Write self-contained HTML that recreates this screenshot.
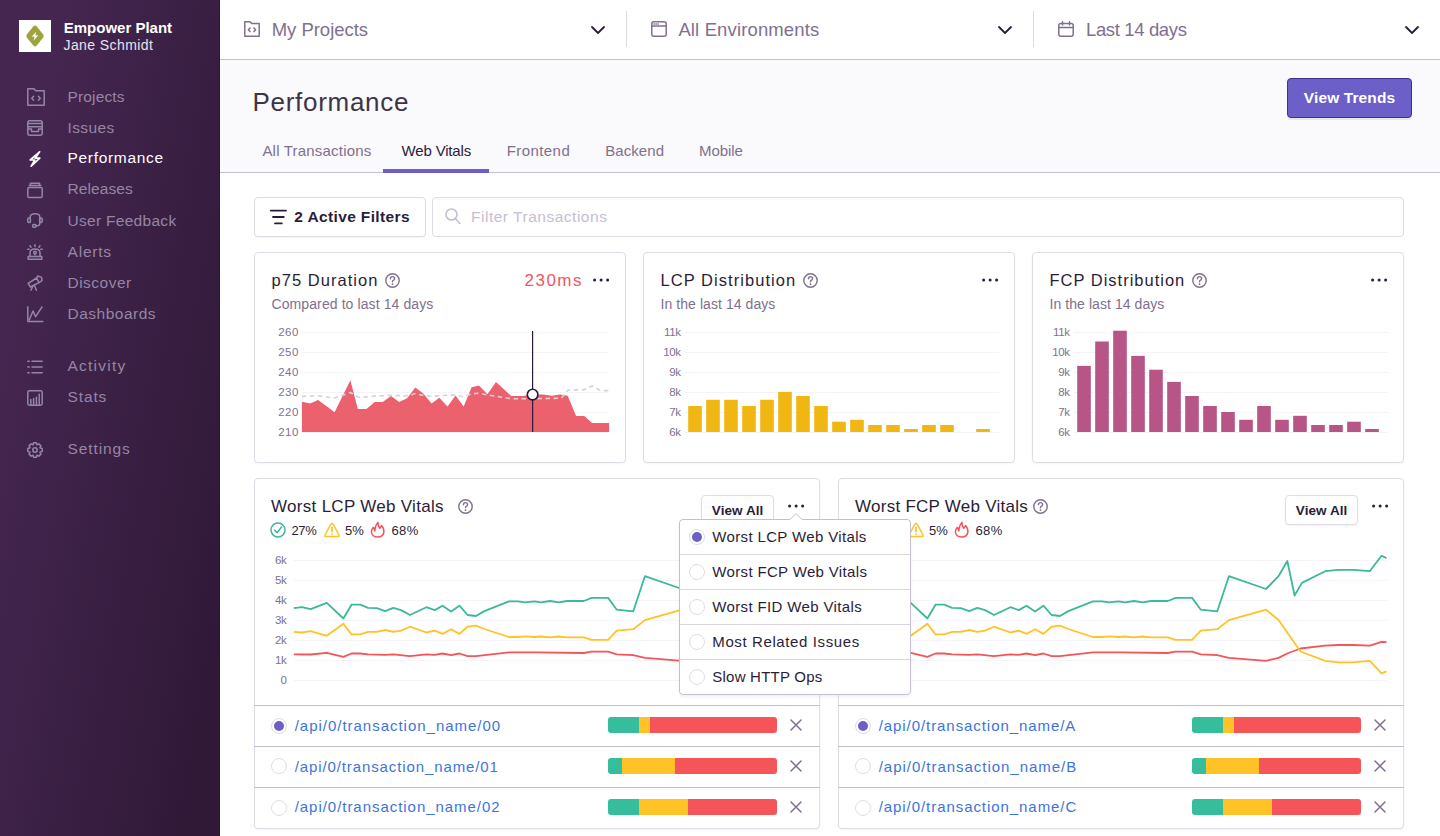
<!DOCTYPE html><html><head><meta charset="utf-8"><title>Performance</title><style>
*{margin:0;padding:0;box-sizing:border-box}
html,body{width:1440px;height:836px;overflow:hidden;background:#fff;font-family:"Liberation Sans",sans-serif}
.t{position:absolute;white-space:nowrap}
svg{overflow:visible}
</style></head><body>
<div style="position:absolute;left:0px;top:0px;width:220px;height:836px;background:linear-gradient(280deg,#2f1937 8.6%,#452650 83.4%);"></div>
<div style="position:absolute;left:219px;top:0px;width:1px;height:836px;background:rgba(30,15,40,0.35);"></div>
<div style="position:absolute;left:19px;top:20px;width:32px;height:32px;background:#fff;"></div>
<svg style="position:absolute;left:26px;top:25px;" width="18" height="22" viewBox="0 0 18 22"><path d="M9 0.4 Q9.8 0.4 10.5 1.2 L17.2 9.4 Q18.2 11 17.2 12.6 L10.5 20.8 Q9 22.4 7.5 20.8 L0.8 12.6 Q-0.2 11 0.8 9.4 L7.5 1.2 Q8.2 0.4 9 0.4Z" fill="#9DA43F"/><path d="M10.2 6.8 L5.6 11.8 L8.6 11.6 L7.6 15.4 L12.4 10.2 L9.4 10.4Z" fill="#fff"/></svg>
<div class="t" style="left:63.75px;top:20.30px;font-size:15px;line-height:15px;color:#fff;font-weight:700;">Empower Plant</div>
<div class="t" style="left:63.50px;top:37.90px;font-size:14px;line-height:14px;color:#E8E2EE;letter-spacing:0.409px;">Jane Schmidt</div>
<svg style="position:absolute;left:27px;top:88px;" width="18" height="18" viewBox="0 0 18 18"><path d="M0.8 0.8 H7 L8.8 2.8 H17.2 V17.2 H0.8 Z" fill="none" stroke="#9586A5" stroke-width="1.5" stroke-linejoin="round" stroke-linecap="round"/><path d="M6.6 8.2 L4.8 10.2 L6.6 12.2 M11.4 8.2 L13.2 10.2 L11.4 12.2" fill="none" stroke="#9586A5" stroke-width="1.5" stroke-linejoin="round" stroke-linecap="round"/></svg>
<div class="t" style="left:67.50px;top:89.13px;font-size:15.5px;line-height:15.5px;color:#9586A5;letter-spacing:0.143px;">Projects</div>
<svg style="position:absolute;left:27px;top:120px;" width="16" height="16" viewBox="0 0 16 16"><rect x="0.8" y="0.8" width="14.4" height="14.4" rx="2" fill="none" stroke="#9586A5" stroke-width="1.5" stroke-linejoin="round" stroke-linecap="round"/><path d="M0.8 3.6 H15.2 M0.8 6.8 H15.2" fill="none" stroke="#9586A5" stroke-width="1.5" stroke-linejoin="round" stroke-linecap="round"/><path d="M0.8 9 H4.5 V11.6 H11.5 V9 H15.2" fill="none" stroke="#9586A5" stroke-width="1.5" stroke-linejoin="round" stroke-linecap="round"/></svg>
<div class="t" style="left:67.50px;top:119.88px;font-size:15.5px;line-height:15.5px;color:#9586A5;letter-spacing:0.37px;">Issues</div>
<svg style="position:absolute;left:29px;top:151px;" width="12" height="16" viewBox="0 0 12 16"><path d="M10.6 0.8 L1.2 9 H5.8 L2.2 15.2 L10.8 7.2 H6.2 Z" fill="none" stroke="#fff" stroke-width="1.7" stroke-linejoin="round" stroke-linecap="round"/></svg>
<div class="t" style="left:67.50px;top:150.38px;font-size:15.5px;line-height:15.5px;color:#fff;letter-spacing:0.685px;">Performance</div>
<svg style="position:absolute;left:27px;top:182px;" width="16" height="16" viewBox="0 0 16 16"><path d="M3.4 3.5 V1.2 H12.6 V3.5" fill="none" stroke="#9586A5" stroke-width="1.5" stroke-linejoin="round" stroke-linecap="round"/><path d="M2.2 3.6 H13.8" fill="none" stroke="#9586A5" stroke-width="1.5" stroke-linejoin="round" stroke-linecap="round"/><rect x="0.8" y="5.4" width="14.4" height="10" rx="1.2" fill="none" stroke="#9586A5" stroke-width="1.5" stroke-linejoin="round" stroke-linecap="round"/></svg>
<div class="t" style="left:67.50px;top:181.38px;font-size:15.5px;line-height:15.5px;color:#9586A5;letter-spacing:0.093px;">Releases</div>
<svg style="position:absolute;left:27px;top:213px;" width="16" height="15" viewBox="0 0 16 15"><path d="M3.2 5.2 V4 Q3.2 0.8 8 0.8 Q12.8 0.8 12.8 4 V10.5 Q12.8 12.8 9.8 12.8 H8.5" fill="none" stroke="#9586A5" stroke-width="1.5" stroke-linejoin="round" stroke-linecap="round"/><rect x="0.8" y="5" width="2.6" height="4.6" rx="1" fill="none" stroke="#9586A5" stroke-width="1.5" stroke-linejoin="round" stroke-linecap="round"/><rect x="12.6" y="5" width="2.6" height="4.6" rx="1" fill="none" stroke="#9586A5" stroke-width="1.5" stroke-linejoin="round" stroke-linecap="round"/><rect x="5.6" y="11.6" width="3.4" height="2.6" rx="1" fill="none" stroke="#9586A5" stroke-width="1.5" stroke-linejoin="round" stroke-linecap="round"/></svg>
<div class="t" style="left:67.50px;top:212.88px;font-size:15.5px;line-height:15.5px;color:#9586A5;letter-spacing:0.296px;">User Feedback</div>
<svg style="position:absolute;left:27px;top:244px;" width="16" height="16" viewBox="0 0 16 16"><path d="M1.2 15.2 V12.4 H14.8 V15.2 Z" fill="none" stroke="#9586A5" stroke-width="1.5" stroke-linejoin="round" stroke-linecap="round"/><path d="M3 12.4 V9 Q3 5 8 5 Q13 5 13 9 V12.4" fill="none" stroke="#9586A5" stroke-width="1.5" stroke-linejoin="round" stroke-linecap="round"/><circle cx="8" cy="8.6" r="1.3" fill="none" stroke="#9586A5" stroke-width="1.5" stroke-linejoin="round" stroke-linecap="round"/><path d="M8 10 V11" fill="none" stroke="#9586A5" stroke-width="1.5" stroke-linejoin="round" stroke-linecap="round"/><path d="M8 0.8 V2.4 M3 1.8 L4 3.2 M13 1.8 L12 3.2 M0.8 5.2 H2.2 M13.8 5.2 H15.2" fill="none" stroke="#9586A5" stroke-width="1.5" stroke-linejoin="round" stroke-linecap="round"/></svg>
<div class="t" style="left:67.50px;top:243.88px;font-size:15.5px;line-height:15.5px;color:#9586A5;letter-spacing:0.8px;">Alerts</div>
<svg style="position:absolute;left:27px;top:275px;" width="16" height="16" viewBox="0 0 16 16"><path d="M1.2 8.4 L9.6 3 L12 7.6 L3.4 12 Z" fill="none" stroke="#9586A5" stroke-width="1.5" stroke-linejoin="round" stroke-linecap="round"/><path d="M9.6 3 L10.6 1 L14.6 2.4 L15 5.6 L12 7.6" fill="none" stroke="#9586A5" stroke-width="1.5" stroke-linejoin="round" stroke-linecap="round"/><path d="M6 10.6 L4 15.2 M7.4 10.2 L9.4 15.2" fill="none" stroke="#9586A5" stroke-width="1.5" stroke-linejoin="round" stroke-linecap="round"/></svg>
<div class="t" style="left:67.50px;top:274.88px;font-size:15.5px;line-height:15.5px;color:#9586A5;letter-spacing:0.479px;">Discover</div>
<svg style="position:absolute;left:27px;top:306px;" width="16" height="16" viewBox="0 0 16 16"><path d="M0.8 0.8 V15.4 H15.8" fill="none" stroke="#9586A5" stroke-width="1.5" stroke-linejoin="round" stroke-linecap="round"/><path d="M2.2 14 L6 5 L8.6 10.6 L15 1" fill="none" stroke="#9586A5" stroke-width="1.5" stroke-linejoin="round" stroke-linecap="round"/></svg>
<div class="t" style="left:67.50px;top:305.88px;font-size:15.5px;line-height:15.5px;color:#9586A5;letter-spacing:0.5px;">Dashboards</div>
<svg style="position:absolute;left:27px;top:359.5px;" width="16" height="14" viewBox="0 0 16 14"><path d="M0.8 1.2 H2.2 M5 1.2 H15.2 M0.8 7 H2.2 M5 7 H15.2 M0.8 12.8 H2.2 M5 12.8 H15.2" fill="none" stroke="#9586A5" stroke-width="1.5" stroke-linejoin="round" stroke-linecap="round"/></svg>
<div class="t" style="left:67.50px;top:357.88px;font-size:15.5px;line-height:15.5px;color:#9586A5;letter-spacing:1.229px;">Activity</div>
<svg style="position:absolute;left:27px;top:389.5px;" width="16" height="16" viewBox="0 0 16 16"><rect x="0.8" y="0.8" width="14.4" height="14.4" rx="1.6" fill="none" stroke="#9586A5" stroke-width="1.5" stroke-linejoin="round" stroke-linecap="round"/><path d="M3.8 15 V9.5 M6.6 15 V8.5 M9.4 15 V7.2 M12.2 15 V4.2" fill="none" stroke="#9586A5" stroke-width="1.5" stroke-linejoin="round" stroke-linecap="round"/></svg>
<div class="t" style="left:67.50px;top:388.88px;font-size:15.5px;line-height:15.5px;color:#9586A5;letter-spacing:0.887px;">Stats</div>
<svg style="position:absolute;left:27px;top:441.5px;" width="16" height="16" viewBox="0 0 16 16"><circle cx="8" cy="8" r="2.2" fill="none" stroke="#9586A5" stroke-width="1.5" stroke-linejoin="round" stroke-linecap="round"/><path d="M6.6 0.8 H9.4 L9.9 2.8 L11.8 1.8 L13.9 3.9 L12.9 5.8 L15.2 6.4 V9.4 L12.9 10.2 L13.9 12.1 L11.8 14.2 L9.9 13.2 L9.4 15.2 H6.6 L6.1 13.2 L4.2 14.2 L2.1 12.1 L3.1 10.2 L0.8 9.4 V6.4 L3.1 5.8 L2.1 3.9 L4.2 1.8 L6.1 2.8 Z" fill="none" stroke="#9586A5" stroke-width="1.5" stroke-linejoin="round" stroke-linecap="round"/></svg>
<div class="t" style="left:67.50px;top:440.88px;font-size:15.5px;line-height:15.5px;color:#9586A5;letter-spacing:0.9px;">Settings</div>
<div style="position:absolute;left:220px;top:59px;width:1220px;height:1px;background:#C6BECF;"></div>
<div style="position:absolute;left:626px;top:11px;width:1px;height:36px;background:#E0DCE5;"></div>
<div style="position:absolute;left:1033px;top:11px;width:1px;height:36px;background:#E0DCE5;"></div>
<svg style="position:absolute;left:244px;top:21px;" width="16" height="16" viewBox="0 0 16 16"><path d="M0.8 0.8 H6 L7.6 2.6 H15.2 V15.2 H0.8 Z" fill="none" stroke="#80708F" stroke-width="1.5" stroke-linejoin="round" stroke-linecap="round"/><path d="M6 7 L4.4 8.8 L6 10.6 M10 7 L11.6 8.8 L10 10.6" fill="none" stroke="#80708F" stroke-width="1.5" stroke-linejoin="round" stroke-linecap="round"/></svg>
<div class="t" style="left:271.70px;top:20.84px;font-size:18.5px;line-height:18.5px;color:#80708F;letter-spacing:-0.025px;">My Projects</div>
<svg style="position:absolute;left:651px;top:21px;" width="16" height="16" viewBox="0 0 16 16"><rect x="0.8" y="0.8" width="14.4" height="14.4" rx="2" fill="none" stroke="#80708F" stroke-width="1.5" stroke-linejoin="round" stroke-linecap="round"/><path d="M0.8 5 H15.2" fill="none" stroke="#80708F" stroke-width="1.5" stroke-linejoin="round" stroke-linecap="round"/><path d="M3 3 H3.3 M5 3 H5.3 M7 3 H7.3" fill="none" stroke="#80708F" stroke-width="1.5" stroke-linejoin="round" stroke-linecap="round"/></svg>
<div class="t" style="left:678.40px;top:20.84px;font-size:18.5px;line-height:18.5px;color:#80708F;letter-spacing:0.137px;">All Environments</div>
<svg style="position:absolute;left:1058px;top:21px;" width="16" height="16" viewBox="0 0 16 16"><rect x="0.8" y="2.5" width="14.4" height="12.7" rx="2" fill="none" stroke="#80708F" stroke-width="1.5" stroke-linejoin="round" stroke-linecap="round"/><path d="M0.8 6.5 H15.2 M4.5 0.8 V4 M11.5 0.8 V4" fill="none" stroke="#80708F" stroke-width="1.5" stroke-linejoin="round" stroke-linecap="round"/></svg>
<div class="t" style="left:1086.00px;top:20.84px;font-size:18.5px;line-height:18.5px;color:#80708F;letter-spacing:-0.364px;">Last 14 days</div>
<svg style="position:absolute;left:591px;top:26px;" width="14" height="8" viewBox="0 0 14 8"><path d="M1 1 L7 7 L13 1" fill="none" stroke="#2B1D38" stroke-width="1.8" stroke-linejoin="round" stroke-linecap="round"/></svg>
<svg style="position:absolute;left:998px;top:26px;" width="14" height="8" viewBox="0 0 14 8"><path d="M1 1 L7 7 L13 1" fill="none" stroke="#2B1D38" stroke-width="1.8" stroke-linejoin="round" stroke-linecap="round"/></svg>
<svg style="position:absolute;left:1405px;top:26px;" width="14" height="8" viewBox="0 0 14 8"><path d="M1 1 L7 7 L13 1" fill="none" stroke="#2B1D38" stroke-width="1.8" stroke-linejoin="round" stroke-linecap="round"/></svg>
<div style="position:absolute;left:220px;top:60px;width:1220px;height:112px;background:#FAF9FB;"></div>
<div class="t" style="left:252.40px;top:88.59px;font-size:26px;line-height:26px;color:#3E3446;letter-spacing:0.725px;">Performance</div>
<div style="position:absolute;left:1287px;top:78px;width:125px;height:40px;background:#6C5FC7;border:1px solid #3D328E;border-radius:4px;box-shadow:0 2px 0 rgba(0,0,0,0.08);"></div>
<div class="t" style="left:1303.80px;top:89.68px;font-size:15.5px;line-height:15.5px;color:#fff;font-weight:700;letter-spacing:0.115px;">View Trends</div>
<div class="t" style="left:262.40px;top:142.80px;font-size:15px;line-height:15px;color:#80708F;letter-spacing:0.2px;">All Transactions</div>
<div class="t" style="left:401.60px;top:142.80px;font-size:15px;line-height:15px;color:#2B1D38;letter-spacing:-0.172px;">Web Vitals</div>
<div class="t" style="left:506.70px;top:142.80px;font-size:15px;line-height:15px;color:#80708F;letter-spacing:0.429px;">Frontend</div>
<div class="t" style="left:605.20px;top:142.80px;font-size:15px;line-height:15px;color:#80708F;letter-spacing:0.083px;">Backend</div>
<div class="t" style="left:699.00px;top:142.80px;font-size:15px;line-height:15px;color:#80708F;letter-spacing:-0.05px;">Mobile</div>
<div style="position:absolute;left:220px;top:172px;width:1220px;height:1px;background:#C6BECF;"></div>
<div style="position:absolute;left:383px;top:169px;width:106px;height:4px;background:#6C5FC7;"></div>
<div style="position:absolute;left:254px;top:197px;width:172px;height:40px;background:#fff;border:1px solid #E0DCE5;border-radius:4px;box-shadow:0 1px 1px rgba(43,29,56,0.06);"></div>
<svg style="position:absolute;left:270px;top:209px;" width="17" height="16" viewBox="0 0 17 16"><path d="M0.8 1.6 H16 M3 8 H13.8 M5 14.4 H11.8" fill="none" stroke="#2B1D38" stroke-width="1.8" stroke-linecap="round"/></svg>
<div class="t" style="left:294.30px;top:208.88px;font-size:15.5px;line-height:15.5px;color:#2B1D38;font-weight:700;letter-spacing:0.37px;">2 Active Filters</div>
<div style="position:absolute;left:432px;top:197px;width:972px;height:40px;background:#fff;border:1px solid #E0DCE5;border-radius:4px;box-shadow:inset 0 2px 0 rgba(0,0,0,0.02);"></div>
<svg style="position:absolute;left:445px;top:208px;" width="16" height="17" viewBox="0 0 16 17"><circle cx="6.5" cy="6.5" r="5.5" fill="none" stroke="#C6BECF" stroke-width="1.6"/><path d="M10.5 10.7 L15 15.5" stroke="#C6BECF" stroke-width="1.6" stroke-linecap="round"/></svg>
<div class="t" style="left:471.00px;top:208.88px;font-size:15.5px;line-height:15.5px;color:#C6BECF;letter-spacing:0.514px;">Filter Transactions</div>
<div style="position:absolute;left:254px;top:252px;width:372px;height:211px;background:#fff;border:1px solid #E0DCE5;border-radius:4px;box-shadow:0 1px 2px rgba(43,29,56,0.05);"></div>
<div class="t" style="left:271.50px;top:272.28px;font-size:16.5px;line-height:16.5px;color:#2B1D38;letter-spacing:1.045px;">p75 Duration</div>
<svg style="position:absolute;left:384.5px;top:273.0px;" width="15" height="15" viewBox="0 0 15 15"><circle cx="7.5" cy="7.5" r="6.7" fill="none" stroke="#80708F" stroke-width="1.4"/><path d="M5.4 5.8 Q5.4 3.6 7.5 3.6 Q9.6 3.6 9.6 5.5 Q9.6 6.8 8.2 7.4 Q7.5 7.8 7.5 8.8" fill="none" stroke="#80708F" stroke-width="1.4" stroke-linecap="round"/><circle cx="7.5" cy="11.2" r="0.9" fill="#80708F"/></svg>
<div class="t" style="left:524.50px;top:271.86px;font-size:17px;line-height:17px;color:#F55459;letter-spacing:1.5px;">230ms</div>
<svg style="position:absolute;left:592.5px;top:278px;" width="17" height="4" viewBox="0 0 17 4"><circle cx="1.6" cy="2" r="1.5" fill="#2B1D38"/><circle cx="8.1" cy="2" r="1.5" fill="#2B1D38"/><circle cx="14.6" cy="2" r="1.5" fill="#2B1D38"/></svg>
<div class="t" style="left:271.50px;top:296.90px;font-size:14px;line-height:14px;color:#80708F;letter-spacing:0.098px;">Compared to last 14 days</div>
<div style="position:absolute;left:302px;top:332px;width:307px;height:1px;background:#F5F3F7;"></div>
<div class="t" style="left:250px;width:48.7px;text-align:right;top:326px;font-size:11.5px;line-height:12px;color:#80708F;letter-spacing:0.4px">260</div>
<div style="position:absolute;left:302px;top:352px;width:307px;height:1px;background:#F5F3F7;"></div>
<div class="t" style="left:250px;width:48.7px;text-align:right;top:346px;font-size:11.5px;line-height:12px;color:#80708F;letter-spacing:0.4px">250</div>
<div style="position:absolute;left:302px;top:372px;width:307px;height:1px;background:#F5F3F7;"></div>
<div class="t" style="left:250px;width:48.7px;text-align:right;top:366px;font-size:11.5px;line-height:12px;color:#80708F;letter-spacing:0.4px">240</div>
<div style="position:absolute;left:302px;top:392px;width:307px;height:1px;background:#F5F3F7;"></div>
<div class="t" style="left:250px;width:48.7px;text-align:right;top:386px;font-size:11.5px;line-height:12px;color:#80708F;letter-spacing:0.4px">230</div>
<div style="position:absolute;left:302px;top:412px;width:307px;height:1px;background:#F5F3F7;"></div>
<div class="t" style="left:250px;width:48.7px;text-align:right;top:406px;font-size:11.5px;line-height:12px;color:#80708F;letter-spacing:0.4px">220</div>
<div style="position:absolute;left:302px;top:432px;width:307px;height:1px;background:#F5F3F7;"></div>
<div class="t" style="left:250px;width:48.7px;text-align:right;top:426px;font-size:11.5px;line-height:12px;color:#80708F;letter-spacing:0.4px">210</div>
<svg style="position:absolute;left:0px;top:0px;pointer-events:none" width="1440" height="836" viewBox="0 0 1440 836"><path d="M301.9,432 L301.9,401.8 L310.2,403.5 L318.1,400.0 L326.0,405.8 L334.6,412.3 L350.4,380.3 L357.8,409.0 L366.5,409.0 L374.8,402.1 L382.7,402.1 L391.0,396.1 L399.2,402.1 L407.1,398.2 L415.3,387.5 L423.3,393.6 L431.5,403.5 L439.4,397.8 L447.5,406.4 L455.5,395.4 L463.7,406.4 L471.6,387.2 L479.0,385.6 L487.4,394.2 L496.0,382.0 L503.9,389.2 L511.3,396.1 L523.2,396.1 L527.6,394.9 L532.6,394.6 L543.3,394.4 L552.0,395.8 L559.9,394.6 L567.7,395.8 L576.1,415.9 L584.3,415.9 L592.1,422.9 L609.1,422.9 L609.1,432 Z" fill="#EB616E"/><polyline points="301.9,396.4 318.1,395.8 334.6,398.0 350.4,392.5 359.0,397.5 374.8,396.1 391.0,395.4 407.1,395.8 415.3,393.6 423.3,395.4 431.5,396.5 439.4,395.6 455.0,394.9 463.7,396.8 471.6,393.9 479.0,393.2 487.4,394.9 503.9,397.5 511.3,398.7 532.6,398.7 561.3,398.2 567.7,390.3 584.3,389.6 592.1,386.0 600.8,390.6 609.1,390.6" fill="none" stroke="#D6D1DD" stroke-width="1.6" stroke-dasharray="4.5,3.5"/><path d="M532.6 331 V432" stroke="#2B1D38" stroke-width="1.2"/><circle cx="532.6" cy="394.6" r="5.3" fill="#fff" stroke="#2B1D38" stroke-width="1.6"/></svg>
<div style="position:absolute;left:643px;top:252px;width:372px;height:211px;background:#fff;border:1px solid #E0DCE5;border-radius:4px;box-shadow:0 1px 2px rgba(43,29,56,0.05);"></div>
<div class="t" style="left:660.50px;top:272.28px;font-size:16.5px;line-height:16.5px;color:#2B1D38;letter-spacing:1.047px;">LCP Distribution</div>
<svg style="position:absolute;left:803px;top:273.0px;" width="15" height="15" viewBox="0 0 15 15"><circle cx="7.5" cy="7.5" r="6.7" fill="none" stroke="#80708F" stroke-width="1.4"/><path d="M5.4 5.8 Q5.4 3.6 7.5 3.6 Q9.6 3.6 9.6 5.5 Q9.6 6.8 8.2 7.4 Q7.5 7.8 7.5 8.8" fill="none" stroke="#80708F" stroke-width="1.4" stroke-linecap="round"/><circle cx="7.5" cy="11.2" r="0.9" fill="#80708F"/></svg>
<svg style="position:absolute;left:982px;top:278px;" width="17" height="4" viewBox="0 0 17 4"><circle cx="1.6" cy="2" r="1.5" fill="#2B1D38"/><circle cx="8.1" cy="2" r="1.5" fill="#2B1D38"/><circle cx="14.6" cy="2" r="1.5" fill="#2B1D38"/></svg>
<div class="t" style="left:660.50px;top:296.90px;font-size:14px;line-height:14px;color:#80708F;letter-spacing:0.069px;">In the last 14 days</div>
<div style="position:absolute;left:685px;top:332px;width:314px;height:1px;background:#F5F3F7;"></div>
<div class="t" style="left:643px;width:37.8px;text-align:right;top:326px;font-size:11.5px;line-height:12px;color:#80708F;letter-spacing:-0.3px">11k</div>
<div style="position:absolute;left:685px;top:352px;width:314px;height:1px;background:#F5F3F7;"></div>
<div class="t" style="left:643px;width:37.8px;text-align:right;top:346px;font-size:11.5px;line-height:12px;color:#80708F;letter-spacing:-0.3px">10k</div>
<div style="position:absolute;left:685px;top:372px;width:314px;height:1px;background:#F5F3F7;"></div>
<div class="t" style="left:643px;width:37.8px;text-align:right;top:366px;font-size:11.5px;line-height:12px;color:#80708F;letter-spacing:-0.3px">9k</div>
<div style="position:absolute;left:685px;top:392px;width:314px;height:1px;background:#F5F3F7;"></div>
<div class="t" style="left:643px;width:37.8px;text-align:right;top:386px;font-size:11.5px;line-height:12px;color:#80708F;letter-spacing:-0.3px">8k</div>
<div style="position:absolute;left:685px;top:412px;width:314px;height:1px;background:#F5F3F7;"></div>
<div class="t" style="left:643px;width:37.8px;text-align:right;top:406px;font-size:11.5px;line-height:12px;color:#80708F;letter-spacing:-0.3px">7k</div>
<div style="position:absolute;left:685px;top:432px;width:314px;height:1px;background:#F5F3F7;"></div>
<div class="t" style="left:643px;width:37.8px;text-align:right;top:426px;font-size:11.5px;line-height:12px;color:#80708F;letter-spacing:-0.3px">6k</div>
<svg style="position:absolute;left:0px;top:0px;pointer-events:none" width="1440" height="836" viewBox="0 0 1440 836"><rect x="688.2" y="406.0" width="13.6" height="26.0" fill="#F0B612"/><rect x="706.2" y="399.8" width="13.6" height="32.2" fill="#F0B612"/><rect x="724.2" y="399.8" width="13.6" height="32.2" fill="#F0B612"/><rect x="742.2" y="406.0" width="13.6" height="26.0" fill="#F0B612"/><rect x="760.2" y="399.8" width="13.6" height="32.2" fill="#F0B612"/><rect x="778.2" y="391.9" width="13.6" height="40.1" fill="#F0B612"/><rect x="796.2" y="396.0" width="13.6" height="36.0" fill="#F0B612"/><rect x="814.2" y="406.0" width="13.6" height="26.0" fill="#F0B612"/><rect x="832.2" y="421.7" width="13.6" height="10.3" fill="#F0B612"/><rect x="850.2" y="419.8" width="13.6" height="12.2" fill="#F0B612"/><rect x="868.2" y="425.0" width="13.6" height="7.0" fill="#F0B612"/><rect x="886.2" y="425.0" width="13.6" height="7.0" fill="#F0B612"/><rect x="904.2" y="429.0" width="13.6" height="3.0" fill="#F0B612"/><rect x="922.2" y="425.0" width="13.6" height="7.0" fill="#F0B612"/><rect x="940.2" y="425.0" width="13.6" height="7.0" fill="#F0B612"/><rect x="976.2" y="429.0" width="13.6" height="3.0" fill="#F0B612"/></svg>
<div style="position:absolute;left:1032px;top:252px;width:372px;height:211px;background:#fff;border:1px solid #E0DCE5;border-radius:4px;box-shadow:0 1px 2px rgba(43,29,56,0.05);"></div>
<div class="t" style="left:1049.50px;top:272.28px;font-size:16.5px;line-height:16.5px;color:#2B1D38;letter-spacing:0.997px;">FCP Distribution</div>
<svg style="position:absolute;left:1192px;top:273.0px;" width="15" height="15" viewBox="0 0 15 15"><circle cx="7.5" cy="7.5" r="6.7" fill="none" stroke="#80708F" stroke-width="1.4"/><path d="M5.4 5.8 Q5.4 3.6 7.5 3.6 Q9.6 3.6 9.6 5.5 Q9.6 6.8 8.2 7.4 Q7.5 7.8 7.5 8.8" fill="none" stroke="#80708F" stroke-width="1.4" stroke-linecap="round"/><circle cx="7.5" cy="11.2" r="0.9" fill="#80708F"/></svg>
<svg style="position:absolute;left:1371px;top:278px;" width="17" height="4" viewBox="0 0 17 4"><circle cx="1.6" cy="2" r="1.5" fill="#2B1D38"/><circle cx="8.1" cy="2" r="1.5" fill="#2B1D38"/><circle cx="14.6" cy="2" r="1.5" fill="#2B1D38"/></svg>
<div class="t" style="left:1049.50px;top:296.90px;font-size:14px;line-height:14px;color:#80708F;letter-spacing:0.069px;">In the last 14 days</div>
<div style="position:absolute;left:1074px;top:332px;width:314px;height:1px;background:#F5F3F7;"></div>
<div class="t" style="left:1032px;width:37.8px;text-align:right;top:326px;font-size:11.5px;line-height:12px;color:#80708F;letter-spacing:-0.3px">11k</div>
<div style="position:absolute;left:1074px;top:352px;width:314px;height:1px;background:#F5F3F7;"></div>
<div class="t" style="left:1032px;width:37.8px;text-align:right;top:346px;font-size:11.5px;line-height:12px;color:#80708F;letter-spacing:-0.3px">10k</div>
<div style="position:absolute;left:1074px;top:372px;width:314px;height:1px;background:#F5F3F7;"></div>
<div class="t" style="left:1032px;width:37.8px;text-align:right;top:366px;font-size:11.5px;line-height:12px;color:#80708F;letter-spacing:-0.3px">9k</div>
<div style="position:absolute;left:1074px;top:392px;width:314px;height:1px;background:#F5F3F7;"></div>
<div class="t" style="left:1032px;width:37.8px;text-align:right;top:386px;font-size:11.5px;line-height:12px;color:#80708F;letter-spacing:-0.3px">8k</div>
<div style="position:absolute;left:1074px;top:412px;width:314px;height:1px;background:#F5F3F7;"></div>
<div class="t" style="left:1032px;width:37.8px;text-align:right;top:406px;font-size:11.5px;line-height:12px;color:#80708F;letter-spacing:-0.3px">7k</div>
<div style="position:absolute;left:1074px;top:432px;width:314px;height:1px;background:#F5F3F7;"></div>
<div class="t" style="left:1032px;width:37.8px;text-align:right;top:426px;font-size:11.5px;line-height:12px;color:#80708F;letter-spacing:-0.3px">6k</div>
<svg style="position:absolute;left:0px;top:0px;pointer-events:none" width="1440" height="836" viewBox="0 0 1440 836"><rect x="1077.2" y="365.9" width="13.6" height="66.1" fill="#B65586"/><rect x="1095.2" y="341.5" width="13.6" height="90.5" fill="#B65586"/><rect x="1113.2" y="330.7" width="13.6" height="101.3" fill="#B65586"/><rect x="1131.2" y="355.9" width="13.6" height="76.1" fill="#B65586"/><rect x="1149.2" y="369.7" width="13.6" height="62.3" fill="#B65586"/><rect x="1167.2" y="381.9" width="13.6" height="50.1" fill="#B65586"/><rect x="1185.2" y="396.0" width="13.6" height="36.0" fill="#B65586"/><rect x="1203.2" y="406.0" width="13.6" height="26.0" fill="#B65586"/><rect x="1221.2" y="412.0" width="13.6" height="20.0" fill="#B65586"/><rect x="1239.2" y="419.8" width="13.6" height="12.2" fill="#B65586"/><rect x="1257.2" y="406.0" width="13.6" height="26.0" fill="#B65586"/><rect x="1275.2" y="419.8" width="13.6" height="12.2" fill="#B65586"/><rect x="1293.2" y="415.8" width="13.6" height="16.2" fill="#B65586"/><rect x="1311.2" y="425.0" width="13.6" height="7.0" fill="#B65586"/><rect x="1329.2" y="425.0" width="13.6" height="7.0" fill="#B65586"/><rect x="1347.2" y="421.7" width="13.6" height="10.3" fill="#B65586"/><rect x="1365.2" y="429.0" width="13.6" height="3.0" fill="#B65586"/></svg>
<div style="position:absolute;left:254px;top:478px;width:566px;height:351px;background:#fff;border:1px solid #E0DCE5;border-radius:4px;box-shadow:0 1px 2px rgba(43,29,56,0.05);"></div>
<div class="t" style="left:271.10px;top:497.81px;font-size:17px;line-height:17px;color:#2B1D38;letter-spacing:0.289px;">Worst LCP Web Vitals</div>
<svg style="position:absolute;left:458.4px;top:498.5px;" width="15" height="15" viewBox="0 0 15 15"><circle cx="7.5" cy="7.5" r="6.7" fill="none" stroke="#80708F" stroke-width="1.4"/><path d="M5.4 5.8 Q5.4 3.6 7.5 3.6 Q9.6 3.6 9.6 5.5 Q9.6 6.8 8.2 7.4 Q7.5 7.8 7.5 8.8" fill="none" stroke="#80708F" stroke-width="1.4" stroke-linecap="round"/><circle cx="7.5" cy="11.2" r="0.9" fill="#80708F"/></svg>
<svg style="position:absolute;left:270px;top:522px;" width="16" height="16" viewBox="0 0 16 16"><circle cx="8" cy="8" r="7" fill="none" stroke="#3CB89B" stroke-width="1.5"/><path d="M4.6 8.3 L7 10.8 L11.6 5" fill="none" stroke="#3CB89B" stroke-width="1.5" stroke-linecap="round" stroke-linejoin="round"/></svg>
<div class="t" style="left:291.40px;top:524.00px;font-size:13px;line-height:13px;color:#2B1D38;letter-spacing:-0.25px;">27%</div>
<svg style="position:absolute;left:324px;top:522px;" width="16" height="16" viewBox="0 0 16 16"><path d="M6.9 2.2 Q8 0.6 9.1 2.2 L15 13 Q15.6 14.6 13.8 14.6 H2.2 Q0.4 14.6 1 13 Z" fill="none" stroke="#FFC227" stroke-width="1.5" stroke-linejoin="round"/><path d="M8 5.4 V9.6" stroke="#FFC227" stroke-width="1.8" stroke-linecap="round"/><circle cx="8" cy="12.1" r="0.95" fill="#FFC227"/></svg>
<div class="t" style="left:345.10px;top:524.00px;font-size:13px;line-height:13px;color:#2B1D38;letter-spacing:-0.15px;">5%</div>
<svg style="position:absolute;left:369.4px;top:521px;" width="16" height="17" viewBox="0 0 16 17"><path d="M4.4 6.4 L5.9 10 Q6.2 4.2 8.9 1.4 Q9.2 5 10.7 7.4 L12.6 4.6 Q15.4 8 14.8 11.5 Q14 16 8.6 16 Q2.8 16 2.4 11 Q2.4 8.2 4.4 6.4 Z" fill="none" stroke="#F55459" stroke-width="1.5" stroke-linejoin="round"/></svg>
<div class="t" style="left:391.40px;top:524.00px;font-size:13px;line-height:13px;color:#2B1D38;letter-spacing:0.4px;">68%</div>
<div style="position:absolute;left:701px;top:495px;width:73px;height:30px;background:#fff;border:1px solid #E0DCE5;border-radius:4px;box-shadow:0 1px 1px rgba(43,29,56,0.05);"></div>
<div class="t" style="left:711.80px;top:503.77px;font-size:13.5px;line-height:13.5px;color:#2B1D38;font-weight:700;letter-spacing:0.071px;">View All</div>
<svg style="position:absolute;left:787.5px;top:504px;" width="17" height="4" viewBox="0 0 17 4"><circle cx="1.6" cy="2" r="1.5" fill="#2B1D38"/><circle cx="8.1" cy="2" r="1.5" fill="#2B1D38"/><circle cx="14.6" cy="2" r="1.5" fill="#2B1D38"/></svg>
<div style="position:absolute;left:294px;top:560px;width:509px;height:1px;background:#F5F3F7;"></div>
<div class="t" style="left:254px;width:32.5px;text-align:right;top:554px;font-size:11.5px;line-height:12px;color:#80708F;letter-spacing:-0.3px">6k</div>
<div style="position:absolute;left:294px;top:580px;width:509px;height:1px;background:#F5F3F7;"></div>
<div class="t" style="left:254px;width:32.5px;text-align:right;top:574px;font-size:11.5px;line-height:12px;color:#80708F;letter-spacing:-0.3px">5k</div>
<div style="position:absolute;left:294px;top:600px;width:509px;height:1px;background:#F5F3F7;"></div>
<div class="t" style="left:254px;width:32.5px;text-align:right;top:594px;font-size:11.5px;line-height:12px;color:#80708F;letter-spacing:-0.3px">4k</div>
<div style="position:absolute;left:294px;top:620px;width:509px;height:1px;background:#F5F3F7;"></div>
<div class="t" style="left:254px;width:32.5px;text-align:right;top:614px;font-size:11.5px;line-height:12px;color:#80708F;letter-spacing:-0.3px">3k</div>
<div style="position:absolute;left:294px;top:640px;width:509px;height:1px;background:#F5F3F7;"></div>
<div class="t" style="left:254px;width:32.5px;text-align:right;top:634px;font-size:11.5px;line-height:12px;color:#80708F;letter-spacing:-0.3px">2k</div>
<div style="position:absolute;left:294px;top:660px;width:509px;height:1px;background:#F5F3F7;"></div>
<div class="t" style="left:254px;width:32.5px;text-align:right;top:654px;font-size:11.5px;line-height:12px;color:#80708F;letter-spacing:-0.3px">1k</div>
<div style="position:absolute;left:294px;top:680px;width:509px;height:1px;background:#F5F3F7;"></div>
<div class="t" style="left:254px;width:32.5px;text-align:right;top:674px;font-size:11.5px;line-height:12px;color:#80708F;letter-spacing:-0.3px">0</div>
<svg style="position:absolute;left:0px;top:0px;pointer-events:none" width="1440" height="836" viewBox="0 0 1440 836"><polyline points="293.8,654.3 310.7,654.5 326.8,652.9 343.4,656.8 351.5,653.5 360.3,653.5 368.1,654.3 385.2,654.9 393.3,654.3 409.9,656.2 426.4,654.3 434.7,654.9 442.5,653.5 451.1,655.2 459.4,653.5 467.6,656.2 476.0,656.2 509.0,652.3 534.3,652.3 583.8,653.0 591.6,651.7 608.1,651.7 616.8,654.3 633.3,655.2 644.9,657.8 682.0,660.8 694.5,657.9 703.3,653.5 716.4,648.5 741.2,645.6 754.3,645.0 768.9,645.0 785.8,645.6 797.5,641.8 802.5,642.1" fill="none" stroke="#F55459" stroke-width="1.8" stroke-linejoin="round"/><polyline points="293.8,631.9 301.9,632.5 310.7,631.1 326.8,635.8 343.4,623.7 351.5,634.4 360.3,634.4 368.1,631.9 376.8,631.9 385.2,630.0 393.3,631.9 401.1,630.6 409.9,626.7 426.4,632.5 434.7,630.6 442.5,633.9 451.1,629.2 459.4,633.9 467.6,626.7 476.0,625.7 484.3,629.0 509.0,637.0 517.8,637.0 525.5,636.4 534.3,637.0 541.3,636.5 550.0,637.3 558.6,636.5 567.3,637.3 583.8,637.3 591.6,639.9 608.1,639.9 616.8,630.6 633.3,629.2 644.9,620.1 682.0,609.7 694.5,620.0 703.3,632.5 716.4,651.5 741.2,660.8 754.3,662.3 768.9,662.3 785.8,660.8 797.5,673.3 802.5,671.3" fill="none" stroke="#FFC227" stroke-width="1.8" stroke-linejoin="round"/><polyline points="293.8,608.2 301.9,607.2 310.7,609.2 318.5,606.2 326.8,602.9 343.4,618.5 351.5,604.7 360.3,604.7 368.1,607.8 376.8,608.2 385.2,611.1 393.3,607.8 401.1,610.1 409.9,615.0 426.4,607.2 434.7,610.1 442.5,605.7 451.1,611.5 459.4,605.7 467.6,615.0 476.0,616.0 484.3,611.1 509.0,601.4 517.8,601.4 525.5,602.4 534.3,601.4 541.3,602.3 550.0,601.0 558.6,602.3 567.3,601.0 583.8,601.0 591.6,597.9 608.1,597.9 616.8,609.7 633.3,611.3 644.9,576.2 682.0,589.0 694.5,576.2 703.3,561.0 710.6,595.5 717.9,582.9 741.2,571.2 754.3,569.8 768.9,569.8 785.8,571.2 797.5,555.8 802.5,558.1" fill="none" stroke="#3CB89B" stroke-width="1.8" stroke-linejoin="round"/></svg>
<div style="position:absolute;left:254px;top:705px;width:566px;height:1px;background:#C6BECF;"></div>
<svg style="position:absolute;left:271px;top:718px;" width="16" height="16" viewBox="0 0 16 16"><circle cx="8" cy="8" r="7.5" fill="#fff" stroke="#E0DCE5" stroke-width="1"/><circle cx="8" cy="8" r="5" fill="#6C5FC7"/></svg>
<div class="t" style="left:294.70px;top:718.30px;font-size:15px;line-height:15px;color:#3D74DB;letter-spacing:0.98px;">/api/0/transaction_name/00</div>
<div style="position:absolute;left:608px;top:717px;width:169px;height:16px;border-radius:3px;overflow:hidden;background:linear-gradient(90deg,#36BD9B 0,#36BD9B 31px,#FFC227 31px,#FFC227 42px,#F55459 42px);"></div>
<svg style="position:absolute;left:790px;top:719px;" width="12" height="12" viewBox="0 0 12 12"><path d="M1 1 L11 11 M11 1 L1 11" stroke="#80708F" stroke-width="1.5" stroke-linecap="round"/></svg>
<div style="position:absolute;left:254px;top:746px;width:566px;height:1px;background:#C6BECF;"></div>
<svg style="position:absolute;left:271px;top:758px;" width="16" height="16" viewBox="0 0 16 16"><circle cx="8" cy="8" r="7.5" fill="#fff" stroke="#E0DCE5" stroke-width="1"/></svg>
<div class="t" style="left:294.70px;top:758.50px;font-size:15px;line-height:15px;color:#3D74DB;letter-spacing:0.892px;">/api/0/transaction_name/01</div>
<div style="position:absolute;left:608px;top:758px;width:169px;height:16px;border-radius:3px;overflow:hidden;background:linear-gradient(90deg,#36BD9B 0,#36BD9B 14px,#FFC227 14px,#FFC227 67px,#F55459 67px);"></div>
<svg style="position:absolute;left:790px;top:760px;" width="12" height="12" viewBox="0 0 12 12"><path d="M1 1 L11 11 M11 1 L1 11" stroke="#80708F" stroke-width="1.5" stroke-linecap="round"/></svg>
<div style="position:absolute;left:254px;top:787px;width:566px;height:1px;background:#C6BECF;"></div>
<svg style="position:absolute;left:271px;top:800px;" width="16" height="16" viewBox="0 0 16 16"><circle cx="8" cy="8" r="7.5" fill="#fff" stroke="#E0DCE5" stroke-width="1"/></svg>
<div class="t" style="left:294.70px;top:799.10px;font-size:15px;line-height:15px;color:#3D74DB;letter-spacing:0.96px;">/api/0/transaction_name/02</div>
<div style="position:absolute;left:608px;top:799px;width:169px;height:16px;border-radius:3px;overflow:hidden;background:linear-gradient(90deg,#36BD9B 0,#36BD9B 31px,#FFC227 31px,#FFC227 80px,#F55459 80px);"></div>
<svg style="position:absolute;left:790px;top:801px;" width="12" height="12" viewBox="0 0 12 12"><path d="M1 1 L11 11 M11 1 L1 11" stroke="#80708F" stroke-width="1.5" stroke-linecap="round"/></svg>
<div style="position:absolute;left:838px;top:478px;width:566px;height:351px;background:#fff;border:1px solid #E0DCE5;border-radius:4px;box-shadow:0 1px 2px rgba(43,29,56,0.05);"></div>
<div class="t" style="left:855.10px;top:497.81px;font-size:17px;line-height:17px;color:#2B1D38;letter-spacing:0.25px;">Worst FCP Web Vitals</div>
<svg style="position:absolute;left:1033px;top:498.5px;" width="15" height="15" viewBox="0 0 15 15"><circle cx="7.5" cy="7.5" r="6.7" fill="none" stroke="#80708F" stroke-width="1.4"/><path d="M5.4 5.8 Q5.4 3.6 7.5 3.6 Q9.6 3.6 9.6 5.5 Q9.6 6.8 8.2 7.4 Q7.5 7.8 7.5 8.8" fill="none" stroke="#80708F" stroke-width="1.4" stroke-linecap="round"/><circle cx="7.5" cy="11.2" r="0.9" fill="#80708F"/></svg>
<svg style="position:absolute;left:854px;top:522px;" width="16" height="16" viewBox="0 0 16 16"><circle cx="8" cy="8" r="7" fill="none" stroke="#3CB89B" stroke-width="1.5"/><path d="M4.6 8.3 L7 10.8 L11.6 5" fill="none" stroke="#3CB89B" stroke-width="1.5" stroke-linecap="round" stroke-linejoin="round"/></svg>
<div class="t" style="left:875.40px;top:524.00px;font-size:13px;line-height:13px;color:#2B1D38;letter-spacing:-0.25px;">27%</div>
<svg style="position:absolute;left:908px;top:522px;" width="16" height="16" viewBox="0 0 16 16"><path d="M6.9 2.2 Q8 0.6 9.1 2.2 L15 13 Q15.6 14.6 13.8 14.6 H2.2 Q0.4 14.6 1 13 Z" fill="none" stroke="#FFC227" stroke-width="1.5" stroke-linejoin="round"/><path d="M8 5.4 V9.6" stroke="#FFC227" stroke-width="1.8" stroke-linecap="round"/><circle cx="8" cy="12.1" r="0.95" fill="#FFC227"/></svg>
<div class="t" style="left:929.10px;top:524.00px;font-size:13px;line-height:13px;color:#2B1D38;letter-spacing:-0.15px;">5%</div>
<svg style="position:absolute;left:953.4px;top:521px;" width="16" height="17" viewBox="0 0 16 17"><path d="M4.4 6.4 L5.9 10 Q6.2 4.2 8.9 1.4 Q9.2 5 10.7 7.4 L12.6 4.6 Q15.4 8 14.8 11.5 Q14 16 8.6 16 Q2.8 16 2.4 11 Q2.4 8.2 4.4 6.4 Z" fill="none" stroke="#F55459" stroke-width="1.5" stroke-linejoin="round"/></svg>
<div class="t" style="left:975.40px;top:524.00px;font-size:13px;line-height:13px;color:#2B1D38;letter-spacing:0.4px;">68%</div>
<div style="position:absolute;left:1285px;top:495px;width:73px;height:30px;background:#fff;border:1px solid #E0DCE5;border-radius:4px;box-shadow:0 1px 1px rgba(43,29,56,0.05);"></div>
<div class="t" style="left:1295.80px;top:503.77px;font-size:13.5px;line-height:13.5px;color:#2B1D38;font-weight:700;letter-spacing:0.071px;">View All</div>
<svg style="position:absolute;left:1371.5px;top:504px;" width="17" height="4" viewBox="0 0 17 4"><circle cx="1.6" cy="2" r="1.5" fill="#2B1D38"/><circle cx="8.1" cy="2" r="1.5" fill="#2B1D38"/><circle cx="14.6" cy="2" r="1.5" fill="#2B1D38"/></svg>
<div style="position:absolute;left:878px;top:560px;width:509px;height:1px;background:#F5F3F7;"></div>
<div class="t" style="left:838px;width:32.5px;text-align:right;top:554px;font-size:11.5px;line-height:12px;color:#80708F;letter-spacing:-0.3px">6k</div>
<div style="position:absolute;left:878px;top:580px;width:509px;height:1px;background:#F5F3F7;"></div>
<div class="t" style="left:838px;width:32.5px;text-align:right;top:574px;font-size:11.5px;line-height:12px;color:#80708F;letter-spacing:-0.3px">5k</div>
<div style="position:absolute;left:878px;top:600px;width:509px;height:1px;background:#F5F3F7;"></div>
<div class="t" style="left:838px;width:32.5px;text-align:right;top:594px;font-size:11.5px;line-height:12px;color:#80708F;letter-spacing:-0.3px">4k</div>
<div style="position:absolute;left:878px;top:620px;width:509px;height:1px;background:#F5F3F7;"></div>
<div class="t" style="left:838px;width:32.5px;text-align:right;top:614px;font-size:11.5px;line-height:12px;color:#80708F;letter-spacing:-0.3px">3k</div>
<div style="position:absolute;left:878px;top:640px;width:509px;height:1px;background:#F5F3F7;"></div>
<div class="t" style="left:838px;width:32.5px;text-align:right;top:634px;font-size:11.5px;line-height:12px;color:#80708F;letter-spacing:-0.3px">2k</div>
<div style="position:absolute;left:878px;top:660px;width:509px;height:1px;background:#F5F3F7;"></div>
<div class="t" style="left:838px;width:32.5px;text-align:right;top:654px;font-size:11.5px;line-height:12px;color:#80708F;letter-spacing:-0.3px">1k</div>
<div style="position:absolute;left:878px;top:680px;width:509px;height:1px;background:#F5F3F7;"></div>
<div class="t" style="left:838px;width:32.5px;text-align:right;top:674px;font-size:11.5px;line-height:12px;color:#80708F;letter-spacing:-0.3px">0</div>
<svg style="position:absolute;left:0px;top:0px;pointer-events:none" width="1440" height="836" viewBox="0 0 1440 836"><polyline points="877.8,654.3 894.7,654.5 910.8,652.9 927.4,656.8 935.5,653.5 944.3,653.5 952.1,654.3 969.2,654.9 977.3,654.3 993.9,656.2 1010.4,654.3 1018.7,654.9 1026.5,653.5 1035.1,655.2 1043.4,653.5 1051.6,656.2 1060.0,656.2 1093.0,652.3 1118.3,652.3 1167.8,653.0 1175.6,651.7 1192.1,651.7 1200.8,654.3 1217.3,655.2 1228.9,657.8 1266.0,660.8 1278.5,657.9 1287.3,653.5 1300.4,648.5 1325.2,645.6 1338.3,645.0 1352.9,645.0 1369.8,645.6 1381.5,641.8 1386.5,642.1" fill="none" stroke="#F55459" stroke-width="1.8" stroke-linejoin="round"/><polyline points="877.8,631.9 885.9,632.5 894.7,631.1 910.8,635.8 927.4,623.7 935.5,634.4 944.3,634.4 952.1,631.9 960.8,631.9 969.2,630.0 977.3,631.9 985.1,630.6 993.9,626.7 1010.4,632.5 1018.7,630.6 1026.5,633.9 1035.1,629.2 1043.4,633.9 1051.6,626.7 1060.0,625.7 1068.3,629.0 1093.0,637.0 1101.8,637.0 1109.5,636.4 1118.3,637.0 1125.3,636.5 1134.0,637.3 1142.6,636.5 1151.3,637.3 1167.8,637.3 1175.6,639.9 1192.1,639.9 1200.8,630.6 1217.3,629.2 1228.9,620.1 1266.0,609.7 1278.5,620.0 1287.3,632.5 1300.4,651.5 1325.2,660.8 1338.3,662.3 1352.9,662.3 1369.8,660.8 1381.5,673.3 1386.5,671.3" fill="none" stroke="#FFC227" stroke-width="1.8" stroke-linejoin="round"/><polyline points="877.8,608.2 885.9,607.2 894.7,609.2 902.5,606.2 910.8,602.9 927.4,618.5 935.5,604.7 944.3,604.7 952.1,607.8 960.8,608.2 969.2,611.1 977.3,607.8 985.1,610.1 993.9,615.0 1010.4,607.2 1018.7,610.1 1026.5,605.7 1035.1,611.5 1043.4,605.7 1051.6,615.0 1060.0,616.0 1068.3,611.1 1093.0,601.4 1101.8,601.4 1109.5,602.4 1118.3,601.4 1125.3,602.3 1134.0,601.0 1142.6,602.3 1151.3,601.0 1167.8,601.0 1175.6,597.9 1192.1,597.9 1200.8,609.7 1217.3,611.3 1228.9,576.2 1266.0,589.0 1278.5,576.2 1287.3,561.0 1294.6,595.5 1301.9,582.9 1325.2,571.2 1338.3,569.8 1352.9,569.8 1369.8,571.2 1381.5,555.8 1386.5,558.1" fill="none" stroke="#3CB89B" stroke-width="1.8" stroke-linejoin="round"/></svg>
<div style="position:absolute;left:838px;top:705px;width:566px;height:1px;background:#C6BECF;"></div>
<svg style="position:absolute;left:855px;top:718px;" width="16" height="16" viewBox="0 0 16 16"><circle cx="8" cy="8" r="7.5" fill="#fff" stroke="#E0DCE5" stroke-width="1"/><circle cx="8" cy="8" r="5" fill="#6C5FC7"/></svg>
<div class="t" style="left:878.70px;top:718.30px;font-size:15px;line-height:15px;color:#3D74DB;letter-spacing:0.931px;">/api/0/transaction_name/A</div>
<div style="position:absolute;left:1192px;top:717px;width:169px;height:16px;border-radius:3px;overflow:hidden;background:linear-gradient(90deg,#36BD9B 0,#36BD9B 31px,#FFC227 31px,#FFC227 42px,#F55459 42px);"></div>
<svg style="position:absolute;left:1374px;top:719px;" width="12" height="12" viewBox="0 0 12 12"><path d="M1 1 L11 11 M11 1 L1 11" stroke="#80708F" stroke-width="1.5" stroke-linecap="round"/></svg>
<div style="position:absolute;left:838px;top:746px;width:566px;height:1px;background:#C6BECF;"></div>
<svg style="position:absolute;left:855px;top:758px;" width="16" height="16" viewBox="0 0 16 16"><circle cx="8" cy="8" r="7.5" fill="#fff" stroke="#E0DCE5" stroke-width="1"/></svg>
<div class="t" style="left:878.70px;top:758.50px;font-size:15px;line-height:15px;color:#3D74DB;letter-spacing:0.969px;">/api/0/transaction_name/B</div>
<div style="position:absolute;left:1192px;top:758px;width:169px;height:16px;border-radius:3px;overflow:hidden;background:linear-gradient(90deg,#36BD9B 0,#36BD9B 14px,#FFC227 14px,#FFC227 67px,#F55459 67px);"></div>
<svg style="position:absolute;left:1374px;top:760px;" width="12" height="12" viewBox="0 0 12 12"><path d="M1 1 L11 11 M11 1 L1 11" stroke="#80708F" stroke-width="1.5" stroke-linecap="round"/></svg>
<div style="position:absolute;left:838px;top:787px;width:566px;height:1px;background:#C6BECF;"></div>
<svg style="position:absolute;left:855px;top:800px;" width="16" height="16" viewBox="0 0 16 16"><circle cx="8" cy="8" r="7.5" fill="#fff" stroke="#E0DCE5" stroke-width="1"/></svg>
<div class="t" style="left:878.70px;top:799.10px;font-size:15px;line-height:15px;color:#3D74DB;letter-spacing:0.938px;">/api/0/transaction_name/C</div>
<div style="position:absolute;left:1192px;top:799px;width:169px;height:16px;border-radius:3px;overflow:hidden;background:linear-gradient(90deg,#36BD9B 0,#36BD9B 31px,#FFC227 31px,#FFC227 80px,#F55459 80px);"></div>
<svg style="position:absolute;left:1374px;top:801px;" width="12" height="12" viewBox="0 0 12 12"><path d="M1 1 L11 11 M11 1 L1 11" stroke="#80708F" stroke-width="1.5" stroke-linecap="round"/></svg>
<div style="position:absolute;left:679px;top:519px;width:232px;height:176px;background:#fff;border:1px solid #C6BECF;border-radius:4px;box-shadow:0 2px 3px rgba(43,29,56,0.06);"></div>
<svg style="position:absolute;left:789.5px;top:513px;" width="12" height="7" viewBox="0 0 12 7"><path d="M0 6.5 L6 0.6 L12 6.5" fill="#fff" stroke="#C6BECF" stroke-width="1"/><rect x="0.5" y="6" width="11" height="2" fill="#fff"/></svg>
<svg style="position:absolute;left:689px;top:529px;" width="16" height="16" viewBox="0 0 16 16"><circle cx="8" cy="8" r="7.5" fill="#fff" stroke="#E0DCE5" stroke-width="1"/><circle cx="8" cy="8" r="5" fill="#6C5FC7"/></svg>
<div class="t" style="left:712.30px;top:529.30px;font-size:15px;line-height:15px;color:#2B1D38;letter-spacing:0.355px;">Worst LCP Web Vitals</div>
<div style="position:absolute;left:680px;top:554px;width:230px;height:1px;background:#DAD5E1;"></div>
<svg style="position:absolute;left:689px;top:564px;" width="16" height="16" viewBox="0 0 16 16"><circle cx="8" cy="8" r="7.5" fill="#fff" stroke="#E0DCE5" stroke-width="1"/></svg>
<div class="t" style="left:712.30px;top:564.30px;font-size:15px;line-height:15px;color:#2B1D38;letter-spacing:0.342px;">Worst FCP Web Vitals</div>
<div style="position:absolute;left:680px;top:589px;width:230px;height:1px;background:#DAD5E1;"></div>
<svg style="position:absolute;left:689px;top:599px;" width="16" height="16" viewBox="0 0 16 16"><circle cx="8" cy="8" r="7.5" fill="#fff" stroke="#E0DCE5" stroke-width="1"/></svg>
<div class="t" style="left:712.30px;top:599.30px;font-size:15px;line-height:15px;color:#2B1D38;letter-spacing:0.363px;">Worst FID Web Vitals</div>
<div style="position:absolute;left:680px;top:624px;width:230px;height:1px;background:#DAD5E1;"></div>
<svg style="position:absolute;left:689px;top:634px;" width="16" height="16" viewBox="0 0 16 16"><circle cx="8" cy="8" r="7.5" fill="#fff" stroke="#E0DCE5" stroke-width="1"/></svg>
<div class="t" style="left:712.30px;top:634.30px;font-size:15px;line-height:15px;color:#2B1D38;letter-spacing:0.611px;">Most Related Issues</div>
<div style="position:absolute;left:680px;top:659px;width:230px;height:1px;background:#DAD5E1;"></div>
<svg style="position:absolute;left:689px;top:669px;" width="16" height="16" viewBox="0 0 16 16"><circle cx="8" cy="8" r="7.5" fill="#fff" stroke="#E0DCE5" stroke-width="1"/></svg>
<div class="t" style="left:712.30px;top:669.30px;font-size:15px;line-height:15px;color:#2B1D38;letter-spacing:0.229px;">Slow HTTP Ops</div>
</body></html>
